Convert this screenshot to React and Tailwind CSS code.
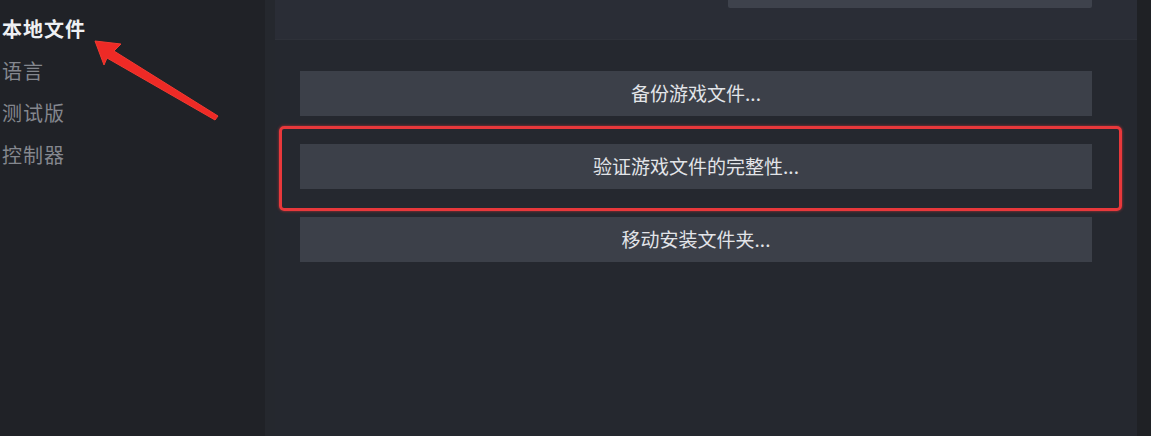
import React from "react";

const sideItems = [
  { label: "本地文件", active: true },
  { label: "语言" },
  { label: "测试版" },
  { label: "控制器" },
];

const actions = ["备份游戏文件...", "验证游戏文件的完整性...", "移动安装文件夹..."];

function RedArrow() {
  return (
    <svg
      className="pointer-events-none absolute left-0 top-0"
      width="1151"
      height="436"
      viewBox="0 0 1151 436"
    >
      <polygon
        points="95,41 121,44 114,51 218,116 215,120 107,58 104,65"
        fill="#ee2a26"
        stroke="#f23a30"
        strokeWidth="1"
        strokeLinejoin="round"
      />
    </svg>
  );
}

export default function App() {
  return (
    <div className="relative flex h-[436px] w-[1151px] overflow-hidden bg-[#202227] font-['Noto_Sans_CJK_SC',sans-serif]">
      <aside className="flex w-[265px] shrink-0 flex-col pl-[2px] pt-[8px]">
        {sideItems.map((item) => (
          <div
            key={item.label}
            className={
              item.active
                ? "h-[42px] text-[20px] leading-[42px] font-semibold tracking-[1px] text-[#eef0f3]"
                : "h-[42px] text-[20px] leading-[42px] tracking-[1px] text-[#84878e]"
            }
          >
            {item.label}
          </div>
        ))}
      </aside>

      <main className="flex w-[872px] shrink-0 flex-col border-l-[10px] border-[#25282e] bg-[#25282f]">
        <div className="flex h-[40px] justify-end border-b border-[#2e3139] bg-[#2a2d36] pr-[45px]">
          <div className="h-[8px] w-[364px] rounded-b-[2px] bg-[#3e424c]" />
        </div>
        <div className="mt-[31px] flex flex-col gap-[28px] pl-[25px]">
          {actions.map((label) => (
            <button
              key={label}
              className="h-[45px] w-[792px] bg-[#3c4049] text-[19px] text-[#e2e4e8]"
            >
              {label}
            </button>
          ))}
        </div>
      </main>

      <div className="flex-1 bg-[#1f2125]" />

      <div className="pointer-events-none absolute left-[279px] top-[126px] h-[85px] w-[843px] rounded-[5px] border-[3px] border-[#e8383b] shadow-[0_0_3px_rgba(232,56,59,0.7)]" />
      <RedArrow />
    </div>
  );
}
